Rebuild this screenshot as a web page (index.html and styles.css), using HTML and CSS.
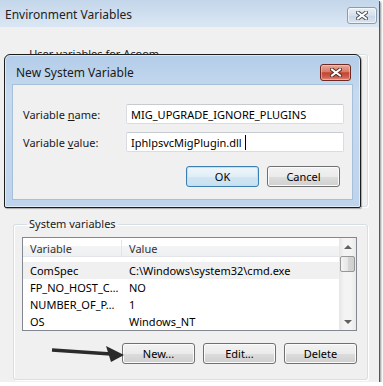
FILE: index.html
```html
<!DOCTYPE html>
<html lang="en">
<head>
    <meta charset="UTF-8">
    <meta name="viewport" content="width=device-width, initial-scale=1.0">
    <title>Environment Variables</title>
    <link rel="stylesheet" href="styles.css">
</head>
<body>
    <div class="window">
        <div class="titlebar">
            <span class="title">Environment Variables</span>
            <div class="close-btn">
                <svg width="12" height="9" viewBox="0 0 12 9"><path d="M2 1.5 L10 7.5 M10 1.5 L2 7.5" stroke="#4a4f57" stroke-width="4" stroke-linecap="square"/><path d="M2 1.5 L10 7.5 M10 1.5 L2 7.5" stroke="#fff" stroke-width="2" stroke-linecap="square"/></svg>
            </div>
        </div>

        <div class="client">
            <fieldset class="group user-group">
                <legend>User variables for Acoom</legend>
            </fieldset>

            <fieldset class="group sys-group">
                <legend>System variables</legend>
                <div class="list">
                    <div class="list-body">
                        <div class="list-header">
                            <div class="col col-name">Variable</div>
                            <div class="col">Value</div>
                        </div>
                        <div class="list-rows">
                            <div class="row selected"><div class="col col-name">ComSpec</div><div class="col">C:\Windows\system32\cmd.exe</div></div>
                            <div class="row"><div class="col col-name">FP_NO_HOST_C…</div><div class="col">NO</div></div>
                            <div class="row"><div class="col col-name">NUMBER_OF_P…</div><div class="col">1</div></div>
                            <div class="row"><div class="col col-name">OS</div><div class="col">Windows_NT</div></div>
                        </div>
                    </div>
                    <div class="scrollbar">
                        <div class="sb-arrow up"></div>
                        <div class="sb-thumb"></div>
                        <div class="sb-track"></div>
                        <div class="sb-arrow down"></div>
                    </div>
                </div>
                <div class="button-row">
                    <div class="btn">New...</div>
                    <div class="btn">Edit...</div>
                    <div class="btn">Delete</div>
                </div>
            </fieldset>
        </div>

        <!-- modal dialog on top of the main window -->
        <div class="dialog">
            <div class="dialog-titlebar">
                <span class="dialog-title">New System Variable</span>
                <div class="close-btn red">
                    <svg width="12" height="9" viewBox="0 0 12 9"><path d="M2 1.5 L10 7.5 M10 1.5 L2 7.5" stroke="#5a2a24" stroke-width="4" stroke-linecap="square"/><path d="M2 1.5 L10 7.5 M10 1.5 L2 7.5" stroke="#fff" stroke-width="2" stroke-linecap="square"/></svg>
                </div>
            </div>
            <div class="dialog-client">
                <div class="form">
                    <span class="label">Variable <u>n</u>ame:</span>
                    <div class="textbox">MIG_UPGRADE_IGNORE_PLUGINS</div>
                    <span class="label">Variable <u>v</u>alue:</span>
                    <div class="textbox">IphlpsvcMigPlugin.dll <span class="caret"></span></div>
                </div>
                <div class="dialog-buttons">
                    <div class="btn default">OK</div>
                    <div class="btn">Cancel</div>
                </div>
            </div>
        </div>

        <svg class="pointer-arrow" width="78" height="22" viewBox="0 0 78 22">
            <path d="M4 8 L63 12" stroke="#2b2b2b" stroke-width="3.5"/>
            <polygon points="58,4 63,20 76,13" fill="#2b2b2b"/>
        </svg>
    </div>
</body>
</html>
```

FILE: styles.css
```css
* {
    box-sizing: border-box;
}

body {
    margin: 0;
    background-color: #fff;
    font-family: "Noto Sans", "Open Sans", sans-serif;
    font-size: 11px;
    color: #000;
}

.window {
    position: relative;
    width: 379px;
    height: 382px;
    display: flex;
    flex-direction: column;
    background-color: #f0f0f0;
    box-shadow: 1px 1px 0 #555, 2px 2px 2px rgba(0, 0, 0, 0.45);
}

.titlebar {
    height: 27px;
    flex: none;
    display: flex;
    align-items: flex-start;
    justify-content: space-between;
    padding: 0 2px 0 5px;
    background: linear-gradient(#c3d6ea, #dbe7f4);
}

.title {
    margin-top: 6px;
    font-size: 12px;
    color: #222;
}

.close-btn {
    width: 30px;
    height: 17px;
    margin-top: 7px;
    display: flex;
    align-items: center;
    justify-content: center;
    border: 1px solid #8b9cb2;
    border-radius: 3px;
    background: linear-gradient(#e9eff6, #d6e0ec 50%, #c9d6e5 51%, #d8e3ef);
    box-shadow: inset 0 0 0 1px rgba(255, 255, 255, 0.6);
}

.close-btn.red {
    width: 31px;
    margin-top: 9px;
    margin-right: 2px;
    border-color: #6e2a22;
    background: linear-gradient(#e9a899, #d77b69 45%, #c2442f 52%, #cf5e4b 80%, #e08f7e);
    box-shadow: inset 0 0 0 1px rgba(255, 210, 200, 0.5);
}

.client {
    flex: 1;
    display: flex;
    flex-direction: column;
    gap: 10px;
    padding: 20px 11px 3px 13px;
}

.group {
    margin: 0;
    border: 1px solid #d5dfe5;
    border-radius: 3px;
    box-shadow: inset 1px 1px 0 #fff, 1px 1px 0 #fff;
}

.group legend {
    margin-left: 5px;
    padding: 0 2px;
    line-height: 14px;
    color: #1a1a1a;
}

.user-group {
    height: 160px;
    flex: none;
}

.sys-group {
    flex: 1;
    display: flex;
    flex-direction: column;
    padding: 6px 10px 15px 8px;
}

.list {
    height: 94px;
    display: flex;
    border: 1px solid #828790;
    background-color: #fff;
}

.list-body {
    flex: 1;
    display: flex;
    flex-direction: column;
}

.list-header,
.row {
    display: grid;
    grid-template-columns: 99px 1fr;
    align-items: center;
}

.list-header {
    height: 20px;
    padding-top: 2px;
    background: linear-gradient(#fff 0%, #fff 45%, #f3f4f6 46%, #eff0f2 100%);
    border-bottom: 1px solid #e3e5e8;
    color: #333;
}

.list-header .col-name {
    border-right: 1px solid #e3e5e8;
    height: 100%;
    display: flex;
    align-items: center;
}

.col {
    padding-left: 7px;
    white-space: nowrap;
}

.list-rows {
    padding-top: 5px;
}

.row {
    height: 17px;
}

.row.selected {
    background-color: #f0f0f0;
}

.scrollbar {
    width: 17px;
    display: flex;
    flex-direction: column;
    background: linear-gradient(90deg, #e6e6e6, #f4f4f4 30%, #f4f4f4 70%, #e9e9e9);
}

.sb-arrow {
    height: 17px;
    display: flex;
    align-items: center;
    justify-content: center;
}

.sb-arrow::after {
    content: "";
    border-left: 4px solid transparent;
    border-right: 4px solid transparent;
}

.sb-arrow.up::after {
    border-bottom: 4px solid #606060;
}

.sb-arrow.down::after {
    border-top: 4px solid #606060;
}

.sb-thumb {
    height: 16px;
    margin: 1px 1px 0 1px;
    border: 1px solid #979797;
    border-radius: 2px;
    background: linear-gradient(90deg, #f4f4f4, #e6e6e6 50%, #d6d6d6 51%, #cfcfcf);
}

.sb-track {
    flex: 1;
}

.button-row {
    display: flex;
    justify-content: flex-end;
    gap: 8px;
    margin-top: 12px;
}

.btn {
    width: 73px;
    height: 21px;
    display: flex;
    align-items: center;
    justify-content: center;
    border: 1px solid #707070;
    border-radius: 3px;
    background: linear-gradient(#f2f2f2 0%, #ebebeb 50%, #dddddd 51%, #cfcfcf 100%);
    box-shadow: inset 0 0 0 1px #fbfbfb;
    color: #000;
}

.btn.default {
    border-color: #3c7fb1;
    background: linear-gradient(#eef6fb 0%, #e1eef7 50%, #d2e6f3 51%, #c7e0f1 100%);
    box-shadow: inset 0 0 0 1px #b9e2fb;
}

.dialog {
    position: absolute;
    left: 4px;
    top: 54px;
    width: 357px;
    height: 154px;
    display: flex;
    flex-direction: column;
    padding: 0 7px 7px 7px;
    border: 1px solid #1c1c1c;
    border-radius: 6px 6px 2px 2px;
    background: linear-gradient(#b3cce8, #c6daef 25%, #bed4ec);
    box-shadow: inset 0 0 0 1px rgba(255, 255, 255, 0.55), 1px 1px 1px rgba(0, 0, 0, 0.3);
}

.dialog-titlebar {
    height: 29px;
    flex: none;
    display: flex;
    align-items: flex-start;
    justify-content: space-between;
    padding-left: 4px;
}

.dialog-title {
    margin-top: 9px;
    font-size: 12px;
    color: #1a1a1a;
}

.dialog-client {
    flex: 1;
    display: flex;
    flex-direction: column;
    padding: 19px 12px 11px 10px;
    background-color: #f0f0f0;
    border: 1px solid #a7bfda;
}

.form {
    display: grid;
    grid-template-columns: 103px 218px;
    row-gap: 8px;
    align-items: center;
}

.label {
    color: #1a1a1a;
}

.textbox {
    height: 20px;
    display: flex;
    align-items: center;
    padding-left: 4px;
    border: 1px solid #d9dde3;
    border-top-color: #c6cbd2;
    border-radius: 2px;
    background-color: #fff;
    white-space: pre;
}

.caret {
    display: inline-block;
    width: 1px;
    height: 15px;
    background-color: #000;
}

.dialog-buttons {
    display: flex;
    justify-content: flex-end;
    gap: 8px;
    margin-top: 14px;
}

.pointer-arrow {
    position: absolute;
    left: 48px;
    top: 342px;
}
```
